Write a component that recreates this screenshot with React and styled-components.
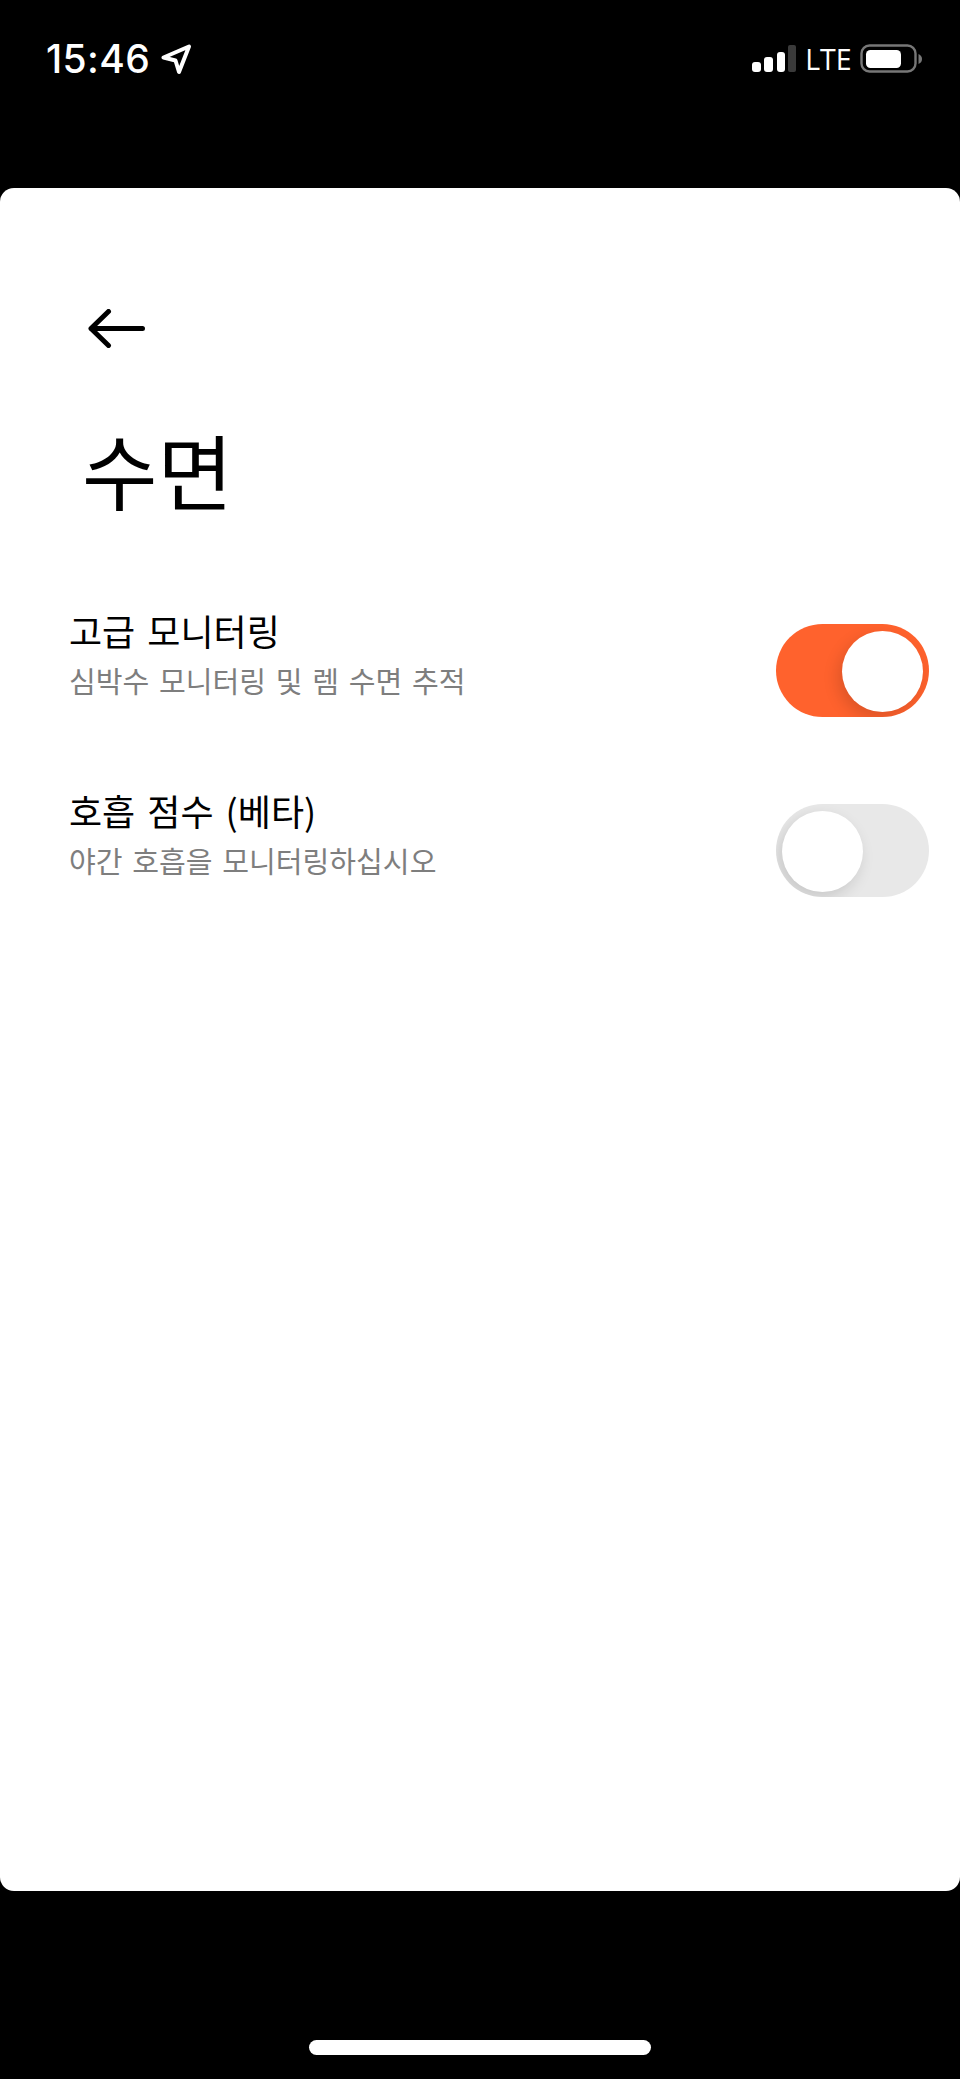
import React from "react";
import styled, { createGlobalStyle } from "styled-components";

const GlobalStyle = createGlobalStyle`
  html, body {
    margin: 0;
    padding: 0;
    background: #000;
  }
  * {
    box-sizing: border-box;
  }
`;

const KOREAN = `"Noto Sans CJK KR", "Noto Sans", sans-serif`;

const Screen = styled.div`
  width: 960px;
  height: 2079px;
  background: #000;
  display: flex;
  flex-direction: column;
  overflow: hidden;
`;

const StatusBar = styled.div`
  height: 188px;
  flex: none;
  padding: 41px 37px 0 46px;
  display: flex;
  align-items: flex-start;
  justify-content: space-between;
  color: #fff;
`;

const StatusLeft = styled.div`
  display: flex;
  align-items: center;
  gap: 11px;
`;

const Clock = styled.span`
  font-family: Inter, sans-serif;
  font-size: 39px;
  line-height: 36px;
  font-weight: 500;
  letter-spacing: 0.4px;
`;

const StatusRight = styled.div`
  display: flex;
  align-items: center;
  height: 36px;
`;

const Network = styled.span`
  font-family: "Open Sans", sans-serif;
  font-size: 30px;
  line-height: 36px;
  font-weight: 400;
  margin: 0 7px 0 8px;
  transform: scaleX(0.95);
`;

const Card = styled.main`
  width: 960px;
  height: 1703px;
  flex: none;
  background: #fff;
  border-radius: 14px;
  padding: 121px 31px 0 69px;
`;

const BackButton = styled.button`
  display: block;
  width: 57px;
  height: 39px;
  margin-left: 19px;
  padding: 0;
  border: none;
  background: none;
`;

const Title = styled.h1`
  margin: 62px 0 0 13px;
  font-family: ${KOREAN};
  font-size: 82px;
  line-height: 118px;
  font-weight: 400;
  color: #000;
`;

const SettingList = styled.div`
  margin-top: 96px;
  display: flex;
  flex-direction: column;
  gap: 87px;
`;

const Row = styled.div`
  display: flex;
  align-items: center;
  justify-content: space-between;
  height: 93px;
`;

const RowText = styled.div`
  display: flex;
  flex-direction: column;
  margin-top: -35px;
`;

const RowTitle = styled.div`
  font-family: ${KOREAN};
  font-size: 36px;
  line-height: 50px;
  word-spacing: 4px;
  color: #000;
`;

const RowCaption = styled.div`
  font-family: ${KOREAN};
  font-size: 29.1px;
  line-height: 42px;
  word-spacing: 3.2px;
  margin-top: 4px;
  color: #7e7e7e;
`;

const Track = styled.div`
  width: 153px;
  height: 93px;
  flex: none;
  border-radius: 47px;
  padding: 7px 6px;
  display: flex;
  justify-content: ${(props) => (props.$on ? "flex-end" : "flex-start")};
  background: ${(props) => (props.$on ? "#ff622d" : "#e8e8e8")};
  overflow: hidden;
`;

const Knob = styled.div`
  width: 81px;
  height: 81px;
  border-radius: 50%;
  background: #fff;
  box-shadow: -4px 6px 16px rgba(0, 0, 0, 0.14);
`;

const HomeBarWrap = styled.div`
  flex: 1;
  display: flex;
  justify-content: center;
  padding-top: 149px;
`;

const HomeBar = styled.div`
  width: 342px;
  height: 15px;
  border-radius: 8px;
  background: #fff;
`;

function LocationIcon() {
  return (
    <svg width="31" height="31" viewBox="0 0 31 31" fill="none">
      <path
        d="M2.5 13.5 L28 2.5 L18 28 L14.5 16.5 Z"
        stroke="#fff"
        strokeWidth="4"
        strokeLinejoin="round"
      />
    </svg>
  );
}

function SignalIcon() {
  return (
    <svg width="44" height="28" viewBox="0 0 44 28">
      <rect x="0" y="17" width="9" height="10" rx="3" fill="#fff" />
      <rect x="12" y="12" width="9" height="15" rx="3" fill="#fff" />
      <rect x="25" y="7" width="8" height="20" rx="3" fill="#fff" />
      <rect x="36" y="0" width="8" height="27" rx="2" fill="#3a3a3a" />
    </svg>
  );
}

function BatteryIcon() {
  return (
    <svg width="63" height="30" viewBox="0 0 63 30">
      <rect x="1.5" y="1.5" width="54" height="26" rx="8" fill="none" stroke="#777" strokeWidth="2.4" />
      <rect x="6" y="6" width="35" height="18" rx="4.5" fill="#fff" />
      <path d="M58.5 10 C61 11 62 13 62 15 C62 17 61 19 58.5 20 Z" fill="#777" />
    </svg>
  );
}

function BackArrow() {
  return (
    <svg width="57" height="39" viewBox="0 0 57 39" fill="none">
      <path
        d="M54.5 19.5 H3 M20.5 2.5 L3 19.5 L20.5 36.5"
        stroke="#000"
        strokeWidth="5"
        strokeLinecap="round"
        strokeLinejoin="round"
      />
    </svg>
  );
}

const settings = [
  { title: "고급 모니터링", caption: "심박수 모니터링 및 렘 수면 추적", on: true },
  { title: "호흡 점수 (베타)", caption: "야간 호흡을 모니터링하십시오", on: false },
];

export default function App() {
  return (
    <Screen>
      <GlobalStyle />
      <StatusBar>
        <StatusLeft>
          <Clock>15:46</Clock>
          <LocationIcon />
        </StatusLeft>
        <StatusRight>
          <SignalIcon />
          <Network>LTE</Network>
          <BatteryIcon />
        </StatusRight>
      </StatusBar>
      <Card>
        <BackButton aria-label="Back">
          <BackArrow />
        </BackButton>
        <Title>수면</Title>
        <SettingList>
          {settings.map((item) => (
            <Row key={item.title}>
              <RowText>
                <RowTitle>{item.title}</RowTitle>
                <RowCaption>{item.caption}</RowCaption>
              </RowText>
              <Track $on={item.on}>
                <Knob />
              </Track>
            </Row>
          ))}
        </SettingList>
      </Card>
      <HomeBarWrap>
        <HomeBar />
      </HomeBarWrap>
    </Screen>
  );
}
